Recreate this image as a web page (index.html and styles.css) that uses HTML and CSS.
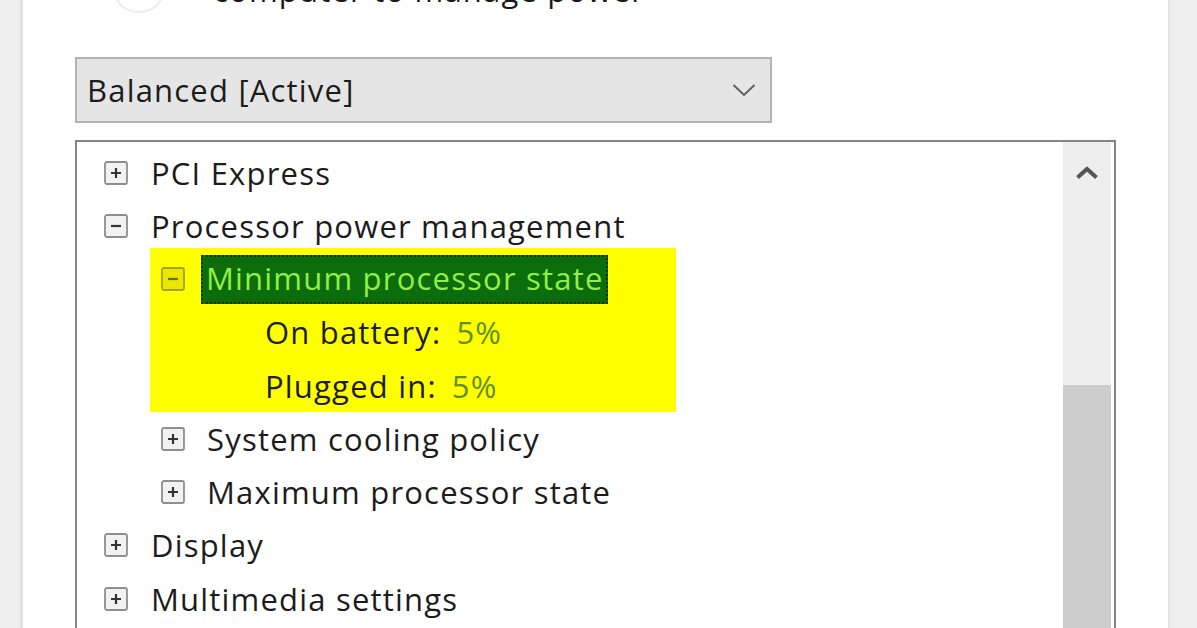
FILE: index.html
```html
<!DOCTYPE html>
<html lang="en">
<head>
<meta charset="utf-8">
<title>Power Options - Advanced settings</title>
<link rel="stylesheet" href="styles.css">
</head>
<body>
<div class="window">
  <div class="side-left"></div>
  <main class="panel">
    <div class="plan-head">
      <svg class="plan-icon" width="52" height="40" viewBox="0 0 52 40">
        <ellipse cx="26" cy="14" rx="22" ry="16" fill="none" stroke="#ececec" stroke-width="2"/>
      </svg>
      <span class="plan-text">computer to manage power</span>
    </div>

    <div class="select">
      <span class="select-text">Balanced [Active]</span>
      <svg class="select-chevron" width="24" height="14" viewBox="0 0 24 14">
        <path d="M1.5 2 L12 12 L22.5 2" fill="none" stroke="#5c5c5c" stroke-width="1.8"/>
      </svg>
    </div>

    <div class="listbox">
      <div class="tree">
        <div class="row lvl0">
          <svg class="exp" width="24" height="24" viewBox="0 0 24 24"><rect x="1" y="1" width="22" height="22" rx="2" class="exp-box"/><path d="M7 12 H17 M12 7 V17" class="exp-sign"/></svg>
          <span class="label">PCI Express</span>
        </div>
        <div class="row lvl0">
          <svg class="exp" width="24" height="24" viewBox="0 0 24 24"><rect x="1" y="1" width="22" height="22" rx="2" class="exp-box"/><path d="M7 12 H17" class="exp-sign"/></svg>
          <span class="label">Processor power management</span>
        </div>

        <div class="highlight">
          <div class="row hl-lvl1">
            <svg class="exp" width="24" height="24" viewBox="0 0 24 24"><rect x="1" y="1" width="22" height="22" rx="2" class="exp-box-hl"/><path d="M7 12 H17" class="exp-sign-hl"/></svg>
            <span class="label selected">Minimum processor state</span>
          </div>
          <div class="row hl-lvl2">
            <span class="label">On battery:</span><span class="value">5%</span>
          </div>
          <div class="row hl-lvl2">
            <span class="label">Plugged in:</span><span class="value">5%</span>
          </div>
        </div>

        <div class="row lvl1">
          <svg class="exp" width="24" height="24" viewBox="0 0 24 24"><rect x="1" y="1" width="22" height="22" rx="2" class="exp-box"/><path d="M7 12 H17 M12 7 V17" class="exp-sign"/></svg>
          <span class="label">System cooling policy</span>
        </div>
        <div class="row lvl1">
          <svg class="exp" width="24" height="24" viewBox="0 0 24 24"><rect x="1" y="1" width="22" height="22" rx="2" class="exp-box"/><path d="M7 12 H17 M12 7 V17" class="exp-sign"/></svg>
          <span class="label">Maximum processor state</span>
        </div>
        <div class="row lvl0">
          <svg class="exp" width="24" height="24" viewBox="0 0 24 24"><rect x="1" y="1" width="22" height="22" rx="2" class="exp-box"/><path d="M7 12 H17 M12 7 V17" class="exp-sign"/></svg>
          <span class="label">Display</span>
        </div>
        <div class="row lvl0">
          <svg class="exp" width="24" height="24" viewBox="0 0 24 24"><rect x="1" y="1" width="22" height="22" rx="2" class="exp-box"/><path d="M7 12 H17 M12 7 V17" class="exp-sign"/></svg>
          <span class="label">Multimedia settings</span>
        </div>
      </div>

      <div class="scrollbar">
        <div class="sb-up">
          <svg width="24" height="14" viewBox="0 0 24 14">
            <path d="M2.5 11.5 L12 3 L21.5 11.5" fill="none" stroke="#555" stroke-width="4" stroke-linejoin="miter"/>
          </svg>
        </div>
        <div class="sb-thumb"></div>
      </div>
    </div>
  </main>
  <div class="side-right"></div>
</div>
</body>
</html>
```

FILE: styles.css
```css
* { box-sizing: border-box; }

html, body {
  margin: 0;
  padding: 0;
  width: 1197px;
  height: 628px;
  overflow: hidden;
  background: #ffffff;
}

body {
  font-family: "Open Sans", "Noto Sans", "Liberation Sans", sans-serif;
  font-size: 31px;
  letter-spacing: 1.2px;
  color: #1c1c1c;
}

.window {
  display: flex;
  height: 628px;
}

.side-left {
  width: 23px;
  flex: none;
  background: #efefef;
  border-right: 3px solid #e2e2e2;
}

.side-right {
  width: 29px;
  flex: none;
  background: #efefef;
  border-left: 2px solid #e6e6e6;
}

.panel {
  flex: 1;
  padding-left: 52px;
  overflow: hidden;
}

.plan-head {
  display: flex;
  align-items: center;
  height: 40px;
  margin-top: -30px;
  line-height: 40px;
}

.plan-icon {
  margin-left: 38px;
  margin-top: 24px;
}

.plan-text {
  margin-left: 48px;
  color: #1a1a1a;
}

.select {
  display: flex;
  align-items: center;
  justify-content: space-between;
  width: 697px;
  height: 66px;
  margin-top: 47px;
  padding: 0 14px 0 10px;
  background: #e5e5e5;
  border: 2px solid #b3b3b3;
}

.select-text {
  line-height: 1;
  margin-top: 0;
}

.listbox {
  display: flex;
  width: 1041px;
  height: 540px;
  margin-top: 17px;
  border: 2px solid #858585;
  border-bottom: none;
}

.tree {
  flex: 1;
  padding-top: 4px;
}

.row {
  display: flex;
  align-items: center;
  height: 53.25px;
  white-space: nowrap;
}

.exp {
  flex: none;
  width: 24px;
  height: 24px;
}

.exp-box {
  fill: #f2f2f2;
  stroke: #8e8e8e;
  stroke-width: 1.8;
}

.exp-sign {
  stroke: #333333;
  stroke-width: 2.2;
  fill: none;
}

.exp-box-hl {
  fill: #e8e800;
  stroke: #a3a300;
  stroke-width: 1.8;
}

.exp-sign-hl {
  stroke: #6a6a00;
  stroke-width: 2.2;
  fill: none;
}

.lvl0 {
  padding-left: 27px;
}

.lvl0 .exp {
  margin-right: 23px;
}

.lvl1 {
  padding-left: 84px;
}

.lvl1 .exp {
  margin-right: 22px;
}

.highlight {
  width: 526px;
  margin-left: 73px;
  margin-top: -5px;
  padding-top: 5px;
  padding-bottom: 0;
  background: #ffff00;
}

.hl-lvl1 {
  padding-left: 11px;
}

.hl-lvl1 .exp {
  margin-right: 16px;
}

.selected {
  display: flex;
  align-items: center;
  height: 49px;
  padding: 0 2px 2px 3px;
  background: #0b6d0b;
  color: #93ef45;
  border: 2px dotted #1f2a10;
}

.hl-lvl2 {
  padding-left: 115px;
}

.value {
  margin-left: 15px;
  color: #5f8f1c;
}

.scrollbar {
  flex: none;
  display: flex;
  flex-direction: column;
  width: 48px;
  margin-right: 3px;
  background: #eeeeee;
}

.sb-up {
  display: flex;
  align-items: center;
  justify-content: center;
  height: 62px;
}

.sb-thumb {
  margin-top: 181px;
  flex: 1;
  background: #cdcdcd;
}
```
